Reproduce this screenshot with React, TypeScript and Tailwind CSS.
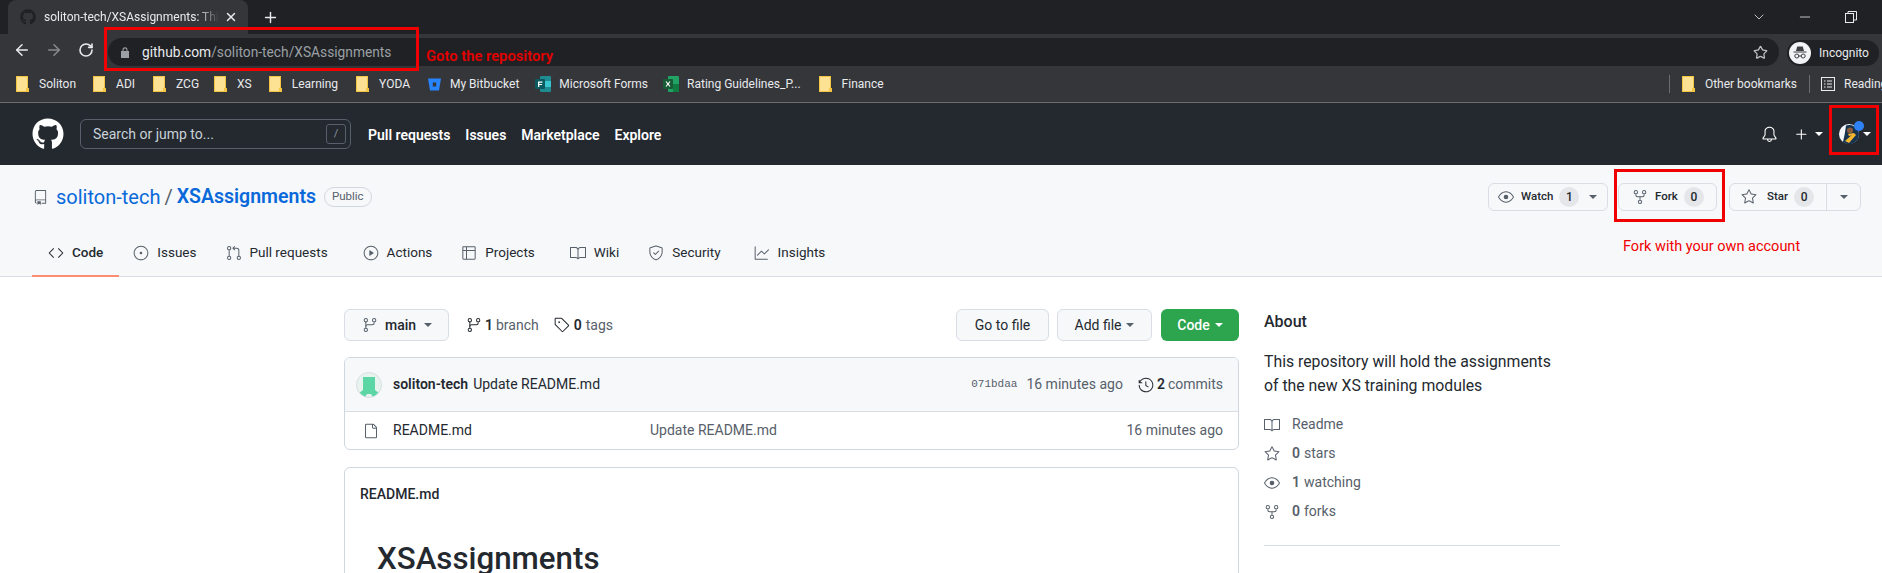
import React from "react";
import { ArrowLeft, ArrowRight, RotateCw, Star, X, Plus, ChevronDown, Minus } from "lucide-react";
import { FaGithub } from "react-icons/fa";
import {
  GoBell,
  GoBook,
  GoCode,
  GoEye,
  GoFile,
  GoGitBranch,
  GoGitPullRequest,
  GoGraph,
  GoHistory,
  GoIssueOpened,
  GoPlay,
  GoPlus,
  GoRepo,
  GoRepoForked,
  GoShieldCheck,
  GoStar,
  GoTable,
  GoTag,
} from "react-icons/go";

function Folder() {
  return (
    <svg width="13" height="16" viewBox="0 0 13 16" className="shrink-0">
      <rect x="0.5" y="0.5" width="11" height="15" fill="#fde293" stroke="#f4c542" />
      <rect x="10" y="12" width="3" height="4" fill="#f4c542" />
    </svg>
  );
}

function Caret({ className }: { className: string }) {
  return <span className={"inline-block w-0 h-0 border-x-4 border-x-transparent border-t-4 " + className}></span>;
}

function Bookmark({ label, ml, gap = "ml-[10px]" }: { label: string; ml: string; gap?: string }) {
  return (
    <div className={"flex items-center " + ml}>
      <Folder />
      <span className={gap}>{label}</span>
    </div>
  );
}

function RepoTab({ icon, label, ml }: { icon: React.ReactNode; label: string; ml: string }) {
  return (
    <div className={"flex items-center gap-2 text-[13.5px] text-[#24292f] " + ml}>
      <span className="text-[#57606a] text-[16px]">{icon}</span>
      {label}
    </div>
  );
}

function Counter({ n }: { n: number }) {
  return (
    <span className="ml-[6px] w-[20px] h-[20px] rounded-full bg-[#e4e6e9] text-[12px] flex items-center justify-center">
      {n}
    </span>
  );
}

function SideRow({ icon, children }: { icon: React.ReactNode; children: React.ReactNode }) {
  return (
    <div className="h-[29px] flex items-center text-[14px] text-[#57606a]">
      <span className="w-[28px] text-[16px]">{icon}</span>
      {children}
    </div>
  );
}

export default function App() {
  return (
    <div className="relative w-[1882px] h-[573px] overflow-hidden bg-white font-['Roboto',sans-serif]">
      {/* chrome tab strip */}
      <div className="h-[34px] bg-[#202124] flex items-end text-white">
        <div className="ml-[8px] w-[240px] h-[34px] bg-[#35363a] rounded-t-lg flex items-center pl-[12px]">
          <FaGithub className="text-[#202124] text-[16px] shrink-0" />
          <span className="ml-[8px] w-[175px] overflow-hidden whitespace-nowrap text-[12px] text-[#e8eaed] [mask-image:linear-gradient(to_right,black_88%,transparent)]">
            soliton-tech/XSAssignments: This
          </span>
          <X size={14} strokeWidth={2.5} className="ml-[5px] text-[#e8eaed]" />
        </div>
        <Plus size={17} className="ml-[14px] mb-[8px] text-[#e8eaed]" />
        <div className="ml-auto flex items-center h-[34px] text-[#e8eaed]">
          <ChevronDown size={16} strokeWidth={1.2} />
          <Minus size={16} strokeWidth={1.2} className="ml-[30px]" />
          <svg width="12" height="12" viewBox="0 0 12 12" className="ml-[32px] mr-[25px]" fill="none" stroke="#e8eaed">
            <rect x="0.5" y="2.5" width="8" height="9" />
            <path d="M3 2.5V.5h8.5v8.5H8.5" />
          </svg>
        </div>
      </div>

      {/* toolbar */}
      <div className="h-[32px] bg-[#35363a] flex items-end">
        <div className="w-[108px] h-[32px] flex items-center text-[#e8eaed]">
          <ArrowLeft size={18} className="ml-[13px]" />
          <ArrowRight size={18} className="ml-[14px] text-[#8a8b8e]" />
          <RotateCw size={16} strokeWidth={2.4} className="ml-[15px]" />
        </div>
        <div className="w-[1671px] h-[28px] rounded-full bg-[#202124] flex items-center pl-[13px] text-[13.75px]">
          <svg width="8" height="11" viewBox="0 0 8 11" fill="#9aa0a6">
            <path d="M1.5 4V2.8a2.5 2.5 0 0 1 5 0V4H8v7H0V4zM2.6 4h2.8V2.8a1.4 1.4 0 0 0-2.8 0z" />
          </svg>
          <span className="ml-[13px] text-[#e8eaed]">github.com</span>
          <span className="text-[#9aa0a6]">/soliton-tech/XSAssignments</span>
          <Star size={15} className="ml-auto mr-[11px] text-[#bdc1c6]" />
        </div>
        <div className="ml-[8px] w-[92px] h-[26px] rounded-full bg-[#202124] flex items-center pl-[2px] text-[12px] text-[#e8eaed]">
          <svg width="22" height="22" viewBox="0 0 22 22" className="shrink-0">
            <circle cx="11" cy="11" r="11" fill="#f1f3f4" />
            <path d="M7 9l1.2-4.5h5.6L15 9zM4.5 9.5h13v1h-13z" fill="#3c4043" />
            <circle cx="7.8" cy="14" r="2" fill="none" stroke="#3c4043" />
            <circle cx="14.2" cy="14" r="2" fill="none" stroke="#3c4043" />
            <path d="M9.8 14h2.4" stroke="#3c4043" />
          </svg>
          <span className="ml-[8px]">Incognito</span>
        </div>
      </div>

      {/* bookmarks bar */}
      <div className="h-[37px] bg-[#35363a] border-b border-[#6b6c6f] flex items-center text-[12px] text-[#e8eaed] whitespace-nowrap">
        <Bookmark label="Soliton" ml="ml-[16px]" />
        <Bookmark label="ADI" ml="ml-[17px]" />
        <Bookmark label="ZCG" ml="ml-[18px]" />
        <Bookmark label="XS" ml="ml-[15px]" />
        <Bookmark label="Learning" ml="ml-[17px]" />
        <Bookmark label="YODA" ml="ml-[18px]" />
        <div className="flex items-center ml-[18px]">
          <svg width="13" height="13" viewBox="0 0 13 13" fill="#2684ff">
            <path d="M0 .5h13l-2 12H2z" />
            <rect x="4.8" y="4.5" width="3.4" height="4" fill="#35363a" />
          </svg>
          <span className="ml-[9px]">My Bitbucket</span>
        </div>
        <div className="flex items-center ml-[16px]">
          <svg width="16" height="16" viewBox="0 0 16 16">
            <rect x="5" width="11" height="16" rx="1" fill="#1f8a8f" />
            <rect x="10" y="5" width="6" height="6" fill="#37c6d0" />
            <rect y="3" width="10" height="10" rx="1" fill="#0b5a60" />
            <path d="M3 5.500h4.500v1.200H4.300v1.200h2.800v1.100H4.300V11H3z" fill="#fff" />
          </svg>
          <span className="ml-[8px]">Microsoft Forms</span>
        </div>
        <div className="flex items-center ml-[15px]">
          <svg width="16" height="16" viewBox="0 0 16 16">
            <rect x="5" width="11" height="16" rx="1" fill="#21a366" />
            <rect x="10" y="8" width="6" height="8" fill="#107c41" />
            <rect y="3" width="10" height="10" rx="1" fill="#185c37" />
            <path d="M3 5.500l2 2.500 2-2.500M3 10.500l2-2.500 2 2.500" stroke="#fff" fill="none" strokeWidth="1.1" />
          </svg>
          <span className="ml-[8px]">Rating Guidelines_P...</span>
        </div>
        <Bookmark label="Finance" ml="ml-[18px]" />
        <div className="ml-auto flex items-center">
          <span className="w-px h-[18px] bg-[#6b6c6f]"></span>
          <Bookmark label="Other bookmarks" ml="ml-[12px]" />
          <span className="ml-[12px] w-px h-[18px] bg-[#6b6c6f]"></span>
          <svg width="14" height="14" viewBox="0 0 14 14" fill="none" stroke="#e8eaed" className="ml-[11px]">
            <rect x="0.5" y="0.5" width="13" height="13" />
            <path d="M3 4h1.500M6 4h5M3 7h1.500M6 7h5M3 10h1.500M6 10h5" />
          </svg>
          <span className="ml-[9px] w-[38px] overflow-hidden">Reading list</span>
        </div>
      </div>

      {/* github header */}
      <div className="h-[62px] bg-[#24292f] flex items-center text-white">
        <FaGithub className="ml-[32px] text-[32px] shrink-0" />
        <div className="ml-[16px] w-[271px] h-[30px] rounded-md border border-[#57606a] flex items-center pl-[12px] pr-[4px] text-[14px] text-[#c9d1d9]">
          <span className="pt-[1px]">Search or jump to...</span>
          <span className="ml-auto w-[20px] h-[20px] rounded-[3px] border border-[#57606a] flex items-center justify-center text-[11px] text-[#8c959f]">
            /
          </span>
        </div>
        <div className="ml-[17px] pt-[2px] flex gap-[15px] text-[14px] font-semibold">
          <span>Pull requests</span>
          <span>Issues</span>
          <span>Marketplace</span>
          <span>Explore</span>
        </div>
        <div className="ml-auto flex items-center">
          <GoBell className="text-[17px]" />
          <GoPlus className="ml-[15px] text-[17px]" />
          <Caret className="ml-[5px] border-t-white" />
          <div className="relative ml-[16px] w-[20px] h-[20px]">
            <svg width="20" height="20" viewBox="0 0 20 20">
              <circle cx="10" cy="10" r="10" fill="#f4f7fa" />
              <path d="M7 1.500A10 10 0 0 1 20 10A10 10 0 0 1 4 18Q6 10 7 1.500z" fill="#15324f" />
              <circle cx="11" cy="6.500" r="3" fill="#8a5a3c" />
              <path d="M6 17L15 9l2 2-7 8z" fill="#f4b731" />
              <path d="M9 10l6-1-1 2-4 1z" fill="#f4b731" />
            </svg>
            <span className="absolute -top-[3px] left-[15px] w-[10px] h-[10px] rounded-full bg-[#2f81f7]"></span>
          </div>
          <Caret className="ml-[4px] mr-[11px] border-t-white" />
        </div>
      </div>

      {/* repo header */}
      <div className="h-[112px] bg-[#f6f8fa] border-b border-[#d8dee4] flex flex-col">
        <div className="h-[64px] flex items-center pl-[33px]">
          <GoRepo className="text-[#57606a] text-[15px]" />
          <span className="ml-[8px] text-[20px] text-[#0969da]">soliton-tech</span>
          <span className="mx-[4px] text-[20px] text-[#57606a]">/</span>
          <span className="text-[19.5px] font-semibold text-[#0969da]">XSAssignments</span>
          <span className="ml-[8px] h-[20px] px-[7px] rounded-full border border-[#d0d7de] text-[11.5px] text-[#57606a] flex items-center">
            Public
          </span>
          <div className="ml-auto flex items-center text-[11.5px] font-medium text-[#24292f] mr-[21px]">
            <div className="w-[120px] h-[28px] rounded-md border border-[#d8dee4] flex items-center pl-[9px]">
              <GoEye className="text-[#57606a] text-[16px]" />
              <span className="ml-[7px]">Watch</span>
              <Counter n={1} />
              <Caret className="ml-[10px] border-t-[#57606a]" />
            </div>
            <div className="ml-[10px] w-[99px] h-[28px] rounded-md border border-[#d8dee4] flex items-center pl-[13px]">
              <GoRepoForked className="text-[#57606a] text-[16px]" />
              <span className="ml-[7px]">Fork</span>
              <Counter n={0} />
            </div>
            <div className="ml-[12px] w-[132px] h-[28px] rounded-md border border-[#d8dee4] flex items-center pl-[11px]">
              <GoStar className="text-[#57606a] text-[16px]" />
              <span className="ml-[10px]">Star</span>
              <Counter n={0} />
              <span className="ml-[12px] w-px h-[26px] bg-[#d8dee4]"></span>
              <Caret className="ml-[13px] border-t-[#57606a]" />
            </div>
          </div>
        </div>
        <div className="relative flex-1 flex items-center pl-[48px]">
          <div className="flex items-center gap-2 text-[13.5px] font-medium text-[#24292f]">
            <GoCode className="text-[16px]" />
            Code
          </div>
          <RepoTab icon={<GoIssueOpened />} label="Issues" ml="ml-[30px]" />
          <RepoTab icon={<GoGitPullRequest />} label="Pull requests" ml="ml-[29px]" />
          <RepoTab icon={<GoPlay />} label="Actions" ml="ml-[35px]" />
          <RepoTab icon={<GoTable />} label="Projects" ml="ml-[29px]" />
          <RepoTab icon={<GoBook />} label="Wiki" ml="ml-[35px]" />
          <RepoTab icon={<GoShieldCheck />} label="Security" ml="ml-[29px]" />
          <RepoTab icon={<GoGraph />} label="Insights" ml="ml-[33px]" />
          <span className="absolute left-[32px] bottom-[-1px] w-[87px] h-[2px] bg-[#fd8c73]"></span>
        </div>
      </div>

      {/* main content */}
      <div className="flex pl-[344px] pt-[32px] text-[#24292f]">
        <div className="w-[895px]">
          <div className="flex items-center h-[32px] text-[14px]">
            <div className="w-[105px] h-[32px] rounded-md border border-[#d8dee4] bg-[#f6f8fa] flex items-center pl-[17px] font-medium">
              <GoGitBranch className="text-[#57606a] text-[16px]" />
              <span className="ml-[7px]">main</span>
              <Caret className="ml-[8px] border-t-[#57606a]" />
            </div>
            <GoGitBranch className="ml-[17px] text-[16px]" />
            <span className="ml-[3px] font-semibold">1</span>
            <span className="ml-[3px] text-[#57606a]">branch</span>
            <GoTag className="ml-[15px] text-[16px]" />
            <span className="ml-[4px] font-semibold">0</span>
            <span className="ml-[4px] text-[#57606a]">tags</span>
            <div className="ml-auto w-[93px] h-[32px] rounded-md border border-[#d8dee4] bg-[#f6f8fa] flex items-center justify-center">
              Go to file
            </div>
            <div className="ml-[8px] w-[95px] h-[32px] rounded-md border border-[#d8dee4] bg-[#f6f8fa] flex items-center justify-center">
              Add file
              <Caret className="ml-[5px] border-t-[#57606a]" />
            </div>
            <div className="ml-[9px] w-[78px] h-[32px] rounded-md bg-[#2da44e] text-white font-medium flex items-center justify-center">
              Code
              <Caret className="ml-[5px] border-t-white" />
            </div>
          </div>

          <div className="mt-[16px] h-[93px] rounded-md border border-[#d0d7de] overflow-hidden text-[14px]">
            <div className="h-[54px] bg-[#f6f8fa] border-b border-[#d8dee4] flex items-center pl-[11px] pr-[15px]">
              <span className="w-[26px] h-[26px] rounded-full bg-[#e8f3ee] border border-[#d8dee4] overflow-hidden flex items-end justify-center">
                <svg width="22" height="20" viewBox="0 0 22 20" fill="#5cd6a5">
                  <path d="M5 0h12v13l5 4v3h-7l-2-3h-4l-2 3H0v-3l5-4z" />
                </svg>
              </span>
              <span className="ml-[11px] font-semibold">soliton-tech</span>
              <span className="ml-[5px] text-[#24292f]">Update README.md</span>
              <span className="ml-auto font-['Liberation_Mono',monospace] text-[11px] text-[#57606a]">071bdaa</span>
              <span className="ml-[9px] text-[#57606a]">16 minutes ago</span>
              <GoHistory className="ml-[15px] text-[16px]" />
              <span className="ml-[3px] font-semibold">2</span>
              <span className="ml-[3px] text-[#57606a]">commits</span>
            </div>
            <div className="h-[37px] flex items-center pl-[18px] pr-[15px]">
              <GoFile className="text-[#57606a] text-[16px]" />
              <span className="ml-[14px] w-[257px]">README.md</span>
              <span className="text-[#57606a]">Update README.md</span>
              <span className="ml-auto text-[#57606a]">16 minutes ago</span>
            </div>
          </div>

          <div className="mt-[17px] h-[200px] rounded-t-md border border-[#d0d7de] pl-[15px] pt-[16px]">
            <div className="text-[14px] font-medium">README.md</div>
            <h1 className="mt-[34px] ml-[17px] text-[31.25px] font-medium leading-[40px]">XSAssignments</h1>
          </div>
        </div>

        <div className="ml-[25px] w-[296px]">
          <h2 className="text-[16px] font-medium leading-[26px]">About</h2>
          <p className="mt-[15px] text-[15.8px] leading-[24px]">
            This repository will hold the assignments
            <br />
            of the new XS training modules
          </p>
          <div className="mt-[12px]">
            <SideRow icon={<GoBook />}>Readme</SideRow>
            <SideRow icon={<GoStar />}>
              <b className="font-semibold mr-[4px]">0</b>stars
            </SideRow>
            <SideRow icon={<GoEye />}>
              <b className="font-semibold mr-[4px]">1</b>watching
            </SideRow>
            <SideRow icon={<GoRepoForked />}>
              <b className="font-semibold mr-[4px]">0</b>forks
            </SideRow>
          </div>
          <div className="mt-[19px] h-px bg-[#d8dee4]"></div>
        </div>
      </div>

      {/* red annotations drawn over the page */}
      <div className="absolute left-[104px] top-[27px] w-[315px] h-[44px] border-[3px] border-[#f00000]"></div>
      <span className="absolute left-[426px] top-[45px] text-[14.75px] font-semibold text-[#e00000]">Goto the repository</span>
      <div className="absolute left-[1829px] top-[105px] w-[50px] h-[50px] border-[3px] border-[#f00000]"></div>
      <div className="absolute left-[1614px] top-[169px] w-[111px] h-[53px] border-[3px] border-[#f00000]"></div>
      <span className="absolute left-[1623px] top-[236px] text-[14.5px] text-[#f00000]">Fork with your own account</span>
    </div>
  );
}
